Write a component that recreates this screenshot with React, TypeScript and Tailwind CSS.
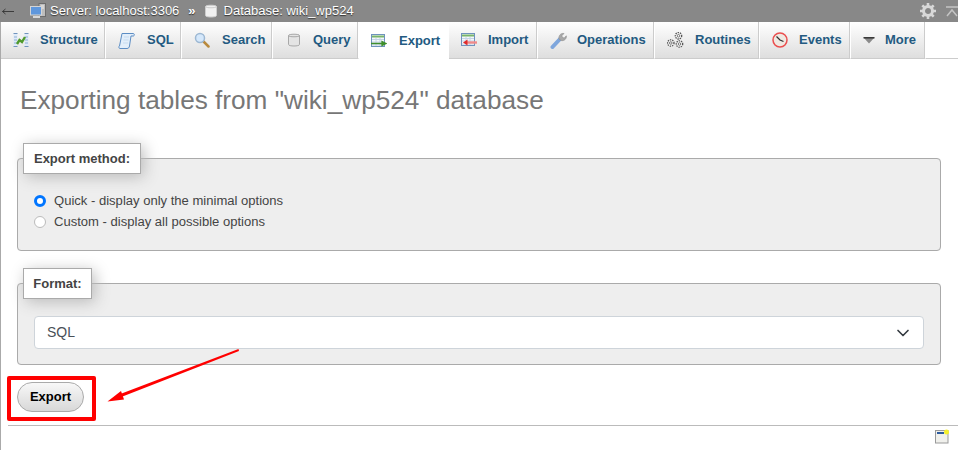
import type { ReactNode } from 'react'
import { ChevronDown } from 'lucide-react'

function StructureIcon() {
  return (
    <svg width="16" height="16" viewBox="0 0 16 16" aria-hidden>
      <path d="M.5 1.500h4M.5 14.500h4M11.500 1.500h4M11.500 14.500h4" stroke="#6f93bd" />
      <rect x="0.500" y="2" width="4" height="12" fill="#dfeaf7" />
      <rect x="11.500" y="2" width="4" height="12" fill="#dfeaf7" />
      <path d="M1 5h3M1 8h3M1 11h3M12 5h3M12 8h3M12 11h3" stroke="#8fb0d6" />
      <path d="M4 12 L6.500 8 L9 10 L12 5" fill="none" stroke="#4f9a2c" strokeWidth="2.400" />
    </svg>
  )
}

function SqlIcon() {
  return (
    <svg width="17" height="17" viewBox="0 0 17 17" aria-hidden>
      <path d="M4 1.500h11.500c1 0 1 2.500 0 2.500h-2.500L11.500 14c-.3 1.500-1 2.500-2.500 2.500H2C.7 16.500.5 14.500 1.500 14L4 1.500z" fill="#e2eefa" stroke="#5c8dc4" />
      <path d="M6 5h5M5.500 8h5M5 11h5" stroke="#c6dbef" />
    </svg>
  )
}

function SearchIcon() {
  return (
    <svg width="16" height="16" viewBox="0 0 16 16" aria-hidden>
      <path d="M9.500 9.500L14.500 14.500" stroke="#b98a3e" strokeWidth="2.500" strokeLinecap="round" />
      <circle cx="6" cy="6" r="4.500" fill="#d5e8fb" stroke="#9db8d3" strokeWidth="1.500" />
    </svg>
  )
}

function CylinderIcon({ fill = '#e4e4e4', stroke = '#a8a8a8' }: { fill?: string; stroke?: string }) {
  return (
    <svg width="12" height="14" viewBox="0 0 12 14" aria-hidden>
      <path d="M.5 2.500C.5 .8 11.500 .8 11.500 2.500V11.500C11.500 13.500 .5 13.500 .5 11.500Z" fill={fill} stroke={stroke} />
      <path d="M.5 2.500C.5 4.200 11.500 4.200 11.500 2.500" fill="none" stroke={stroke} />
    </svg>
  )
}

function TableArrowIcon({ head }: { head: 'left' | 'right' }) {
  return (
    <svg width="16" height="14" viewBox="0 0 16 14" aria-hidden>
      <rect x="0.500" y="0.500" width="13" height="12" fill="#f4f7fb" stroke="#6f93bd" />
      <path d="M1 2.500h12" stroke="#79b56a" strokeWidth="2" />
      <path d="M1 5.500h12M1 8h12M1 11h12M5 4v8M9 4v8" stroke="#c4d4e6" />
      {head === 'right' ? (
        <path d="M0 9.500h12M11 7.500L15 9.500l-4 2z" stroke="#3f8f2c" strokeWidth="1.300" fill="#3f8f2c" />
      ) : (
        <>
          <path d="M16 9.500H6" stroke="#f08a8a" strokeWidth="2.400" />
          <path d="M6.500 6.500L2 9.500l4.500 3z" fill="#e02a2a" />
        </>
      )}
    </svg>
  )
}

function WrenchIcon() {
  return (
    <svg width="17" height="17" viewBox="0 0 17 17" aria-hidden>
      <path d="M2.500 15L10 7" stroke="#7ea6dc" strokeWidth="4" strokeLinecap="round" />
      <path d="M9 7C8.300 3.500 11 .8 14 1.500L11.800 3.800 12.500 5.500 14.300 6 16.300 3.800C16.800 7 14 9.300 11 8.500Z" fill="#a9a9a9" stroke="#8c8c8c" strokeWidth="0.600" />
    </svg>
  )
}

function GearShape({ x, y, r }: { x: number; y: number; r: number }) {
  return (
    <g>
      <circle cx={x} cy={y} r={r} fill="#f6f6f6" stroke="#555" strokeWidth="1.300" strokeDasharray="1.400 0.900" />
      <circle cx={x} cy={y} r={r * 0.4} fill="#fff" stroke="#555" strokeWidth="0.800" />
    </g>
  )
}

function RoutinesIcon() {
  return (
    <svg width="17" height="16" viewBox="0 0 17 16" aria-hidden>
      <GearShape x={11.500} y={3.800} r={3.200} />
      <GearShape x={3.800} y={11} r={3.200} />
      <GearShape x={12.500} y={12} r={3.200} />
    </svg>
  )
}

function ClockIcon() {
  return (
    <svg width="16" height="16" viewBox="0 0 16 16" aria-hidden>
      <circle cx="8" cy="8" r="7" fill="#efe9e2" stroke="#ea4f4f" strokeWidth="1.500" />
      <path d="M4.500 4.500L8 8l3.500 1.500" fill="none" stroke="#333" strokeWidth="1.300" />
    </svg>
  )
}

function MoreIcon() {
  return (
    <svg width="12" height="7" viewBox="0 0 12 7" aria-hidden>
      <path d="M.5 .5h11L6 6.500z" fill="#8a8a8a" />
      <path d="M.5 .8h11" stroke="#222" strokeWidth="1.300" />
    </svg>
  )
}

function ServerIcon() {
  return (
    <svg width="16" height="16" viewBox="0 0 16 16" aria-hidden>
      <rect x="9" y="0.500" width="6.500" height="13" fill="#bdbdbd" stroke="#6c6c6c" />
      <path d="M11 3h3M11 5h3" stroke="#eee" />
      <rect x="0.500" y="3.500" width="11" height="8.500" fill="#5f97dc" stroke="#d4d4d4" />
      <path d="M3 14h7" stroke="#d8d8d8" strokeWidth="2" />
    </svg>
  )
}

function BackArrowIcon() {
  return (
    <svg width="12" height="7" viewBox="0 0 12 7" aria-hidden>
      <path d="M0.500 3.500H12M3.500 1L0.500 3.500 3.500 6" fill="none" stroke="#333" strokeWidth="0.900" />
    </svg>
  )
}

function GearIcon() {
  return (
    <svg width="16" height="16" viewBox="0 0 16 16" aria-hidden>
      <circle cx="8" cy="8" r="4.500" fill="none" stroke="#d8d8d8" strokeWidth="3" />
      <path d="M8 0v3M8 13v3M0 8h3M13 8h3M2.300 2.300l2.200 2.200M11.500 11.500l2.200 2.200M13.700 2.300l-2.200 2.200M4.500 11.500l-2.200 2.200" stroke="#d8d8d8" strokeWidth="2.600" />
    </svg>
  )
}

function CollapseIcon() {
  return (
    <svg width="12" height="11" viewBox="0 0 12 11" aria-hidden>
      <path d="M0 1h12" stroke="#c4c4c4" strokeWidth="1.500" />
      <path d="M1 10l5-6 5 6" fill="none" stroke="#c4c4c4" strokeWidth="1.500" />
    </svg>
  )
}

function ConsoleIcon() {
  return (
    <svg width="15" height="15" viewBox="0 0 15 15" aria-hidden>
      <rect x="0.500" y="1.500" width="12.500" height="12.500" fill="#f0f0ec" stroke="#9a9a9a" />
      <rect x="2" y="3" width="7" height="2" fill="#2c5a9e" />
      <circle cx="11.500" cy="3" r="2.500" fill="#f4f02c" />
    </svg>
  )
}

const tabs: { label: string; width: string; gap: string; icon: ReactNode; active?: boolean }[] = [
  { label: 'Structure', width: 'w-[105px]', gap: 'gap-[11px]', icon: <StructureIcon /> },
  { label: 'SQL', width: 'w-[76px]', gap: 'gap-[12px]', icon: <SqlIcon /> },
  { label: 'Search', width: 'w-[91px]', gap: 'gap-[12px]', icon: <SearchIcon /> },
  { label: 'Query', width: 'w-[86px]', gap: 'gap-[13px]', icon: <span className="ml-[3px]"><CylinderIcon /></span> },
  { label: 'Export', width: 'w-[90px]', gap: 'gap-[12px]', icon: <TableArrowIcon head="right" />, active: true },
  { label: 'Import', width: 'w-[89px]', gap: 'gap-[11px]', icon: <TableArrowIcon head="left" /> },
  { label: 'Operations', width: 'w-[117px]', gap: 'gap-[10px]', icon: <WrenchIcon /> },
  { label: 'Routines', width: 'w-[105px]', gap: 'gap-[11px]', icon: <RoutinesIcon /> },
  { label: 'Events', width: 'w-[91px]', gap: 'gap-[11px]', icon: <ClockIcon /> },
  { label: 'More', width: 'w-[75px]', gap: 'gap-[10px]', icon: <MoreIcon /> },
]

function Fieldset({ legend, legendWidth, children, className }: { legend: string; legendWidth: string; children: ReactNode; className: string }) {
  return (
    <fieldset className={`ml-[16px] w-[924px] rounded border border-[#aaa] bg-[#eee] px-4 ${className}`}>
      <legend className={`ml-[-11px] flex h-[31px] items-center justify-center border border-[#aaa] bg-white text-[13px] font-bold text-[#444] shadow-[3px_3px_15px_#bbb] ${legendWidth}`}>
        {legend}
      </legend>
      {children}
    </fieldset>
  )
}

export default function App() {
  return (
    <div className="relative flex h-[450px] w-[958px] flex-col overflow-hidden bg-white font-['Liberation_Sans',Arial,sans-serif]">
      <div className="flex h-[22px] shrink-0 items-center bg-[#888] text-[13px] text-white [text-shadow:0_1px_1px_#333]">
        <span className="ml-[2px] flex w-[28px]"><BackArrowIcon /></span>
        <ServerIcon />
        <span className="ml-[4px]">Server: localhost:3306</span>
        <span className="ml-[9px] font-bold">»</span>
        <span className="ml-[9px] flex"><CylinderIcon fill="#f0f0f0" stroke="#ccc" /></span>
        <span className="ml-[7px]">Database: wiki_wp524</span>
        <span className="ml-auto flex items-center gap-[10px]">
          <GearIcon />
          <CollapseIcon />
        </span>
      </div>
      <div className="flex-1 border-l border-[#aaa]">
        <nav className="flex h-[37px] border-b border-[#ccc]">
          {tabs.map((t) => (
            <a
              key={t.label}
              className={`flex h-[37px] items-center border-r border-[#fff] pl-3 text-[13px] font-bold text-[#235a81] ${t.width} ${t.gap} ${
                t.active ? 'bg-white' : 'bg-gradient-to-b from-white to-[#dedede] border-b border-b-[#ccc] shadow-[inset_-1px_0_0_#ccc]'
              }`}
            >
              {t.icon}
              <span>{t.label}</span>
            </a>
          ))}
        </nav>
        <h2 className="ml-[19px] mt-[23px] text-[26.2px] leading-[36px] text-[#777]">Exporting tables from "wiki_wp524" database</h2>
        <Fieldset legend="Export method:" legendWidth="w-[118px]" className="mt-[25px] h-[108px]">
          <div className="mt-[18px] flex flex-col gap-[4px] text-[13.05px] leading-[17px] text-[#444]">
            <label className="flex items-center gap-[8px]">
              <span className="box-border h-[12px] w-[12px] rounded-full border-[3px] border-[#0075ff] bg-white" />
              Quick - display only the minimal options
            </label>
            <label className="flex items-center gap-[8px]">
              <span className="box-border h-[12px] w-[12px] rounded-full border border-[#bbb] bg-white" />
              Custom - display all possible options
            </label>
          </div>
        </Fieldset>
        <Fieldset legend="Format:" legendWidth="w-[69px]" className="mt-[17px] h-[97px]">
          <div className="mt-[17px] flex h-[33px] w-[890px] items-center justify-between rounded border border-[#ced4da] bg-white pl-[12px] pr-[10px] text-[14px] text-[#495057]">
            SQL
            <ChevronDown className="h-[20px] w-[20px] text-[#343a40]" strokeWidth={2} aria-hidden />
          </div>
        </Fieldset>
        <div className="ml-[6px] mt-[11px] box-border flex h-[45px] w-[89px] items-start rounded-[2px] border-4 border-[#f00] pl-[6px] pt-[2px]">
          <button
            type="button"
            className="h-[30px] w-[67px] rounded-full border border-[#aaa] bg-gradient-to-b from-[#f8f8f8] to-[#d8d8d8] text-[13px] font-bold text-black"
          >
            Export
          </button>
        </div>
        <div className="ml-[7px] mt-[4px] border-t border-[#bbb]" />
        <div className="mr-[8px] mt-[3px] flex justify-end">
          <ConsoleIcon />
        </div>
      </div>
      <svg className="absolute left-[100px] top-[345px]" width="145" height="62" viewBox="100 345 145 62" aria-hidden>
        <path d="M238.500 349 L119 394.500 L120 397.500 L239 351Z" fill="#f00" />
        <path d="M107.500 401.500 L121 391 L124 399.500Z" fill="#f00" />
      </svg>
    </div>
  )
}
